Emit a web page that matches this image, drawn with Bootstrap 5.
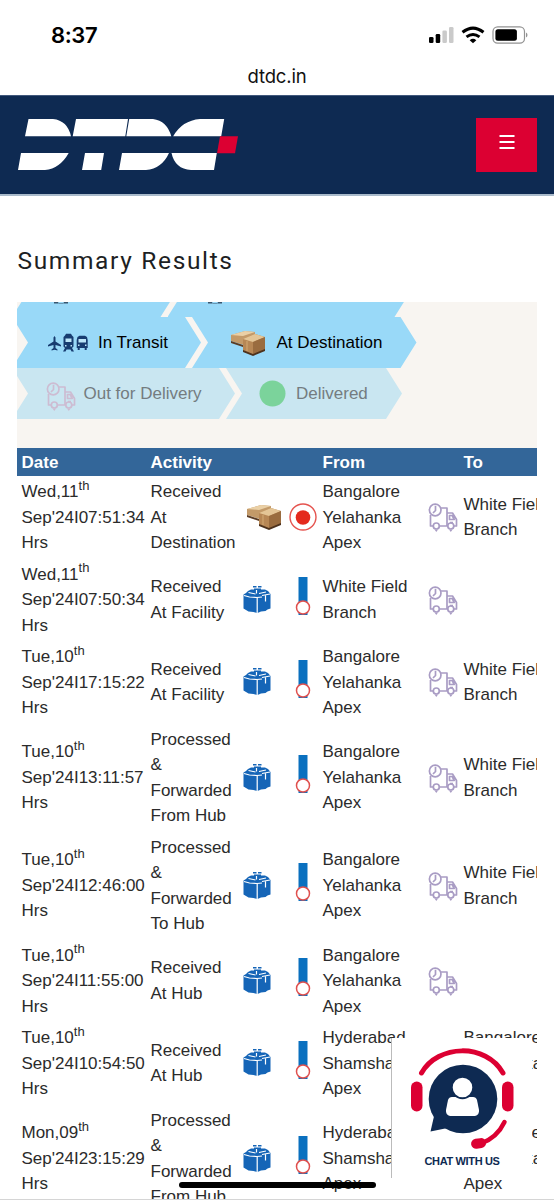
<!DOCTYPE html>
<html lang="en">
<head>
<meta charset="utf-8">
<meta name="viewport" content="width=device-width, initial-scale=1">
<title>DTDC - Summary Results</title>
<link href="https://cdn.jsdelivr.net/npm/bootstrap@5.3.0/dist/css/bootstrap.min.css" rel="stylesheet">
<style>
html,body{height:1200px;overflow:hidden}
body{font-family:"Liberation Sans",Arial,sans-serif;font-size:17px;line-height:25.5px;color:#2b2b2b;background:#fff;position:relative}
.status{height:57px;padding:14px 25px 0 51px;color:#000}
.clock{font:600 22px/42px Inter,sans-serif;letter-spacing:-.4px}
.address{height:38px;font:400 18.5px/38px Inter,sans-serif;color:#111;letter-spacing:-.15px}
.brandbar{height:101px;background:#0e2a52;border-top:1px solid #41587c;border-bottom:2px solid #a9bacb;padding:0 17px}
.menu-btn{width:61px;height:54px;background:#dc0032;border-radius:0}
.page-title{font:400 24.5px/32px Roboto,sans-serif;letter-spacing:1.65px;color:#1d1f24;margin:49px 0 25px 17.5px}
.results{margin:0 17px;width:520px;overflow:hidden}
.steps{height:146px;background:#f8f5f1;overflow:hidden}
.steps-inner{margin:-36px 0 0 -5px}
.step{height:51px;background:#99d9f8;color:#000;white-space:nowrap;clip-path:polygon(0 0,calc(100% - 16px) 0,100% 50%,calc(100% - 16px) 100%,0 100%,16px 50%)}
.step+.step{margin-left:-9px}
.step.pending{background:#c9e6f1;color:#747c80}
.track{width:620px;table-layout:fixed;margin:0}
.track th{height:28px;padding:0 4.5px;background:#336699;color:#fff;font-size:17px;line-height:27px}
.track td{padding:3px 0 3px 4.5px;vertical-align:middle;height:82.5px;color:#2b2b2b}
.track td.pic{padding:0}
.track sup{font-size:13px;line-height:0;top:-7.5px}
.track svg,.step svg{display:block}
.chat{position:absolute;left:391px;top:1038px;width:141px;height:140px;background:#fff;border-left:1px solid #bbb;color:#0e2a52}
.chat-label{font:700 11px/14px "Liberation Sans",sans-serif;letter-spacing:-.35px;text-align:center}
.home{position:absolute;left:179px;top:1182px;width:197px;height:6px;border-radius:3px;background:#000}
.edge{position:absolute;left:0;right:0;bottom:0;height:1px;background:#d5d5d5}
</style>
</head>
<body>
<svg width="0" height="0" class="position-absolute">
<defs>
<symbol id="truck" viewBox="0 0 30 30"><g fill="none" stroke="currentColor" stroke-width="1.7" stroke-linejoin="round"><circle cx="7.200" cy="8" r="5.800"/><path d="M7.500 3.800v4.700l-2.500 2.500M2.500 13v11h2.700M11.500 24h8.300M12.500 6h6.500V24M19 11h5.500l4 6.500V24h-2.500M21.500 13.500h2.700l2 4h-4.700zM22 20.500h3"/><circle cx="8.300" cy="24" r="3"/><circle cx="22.800" cy="24" r="3"/></g><path d="M6.500 27.500h3.600l-1.800 2.500zM21 27.500h3.600L22.800 30z" fill="currentColor"/></symbol>
<symbol id="box" viewBox="0 0 28 28"><path d="M10 0h3.500v1.500H10zM15 0h3.500v1.500H15zM8 3.500h3V2.500h7v1h4l3 1.500 2.500 3v14.500l-3 1-2 1.500-4.500.5-3.500 1.500-4-1-5-.5L3 24l-2.500-1.500V8.500L3 7l2-2z" fill="#1565b7"/><path d="M1 9.500l5.500 1.500 7.500.5 5-.5M5.500 6.500l7 1.500M13.500 4v3.500M14.200 11.500V27M16 7.500l7-1.500M19 9.500l8-1.500M22.500 9.500v6" fill="none" stroke="#fff" stroke-width="1.200"/></symbol>
<symbol id="pallet" viewBox="0 0 36 26"><path d="M1 5l14-4 10 1v8L14 15 1 11z" fill="#c39a69"/><path d="M1 5l14-4 10 1-12 4z" fill="#ead0a6"/><path d="M1 11l12 4v2L1 13z" fill="#5b3c24"/><path d="M13 9l12-5 10 3v13l-12 5-10-4z" fill="#b78755"/><path d="M13 9l12-5 10 3-12 5z" fill="#e4c596"/><path d="M23 12l12-5v13l-12 5z" fill="#9a6c3f"/><path d="M13 20l10 4 12-5v2l-12 5-10-4z" fill="#4d321d"/><path d="M17 11v10" stroke="#d3aa75"/></symbol>
<symbol id="target" viewBox="0 0 30 30"><circle cx="15" cy="15" r="13" fill="none" stroke="#e5544f" stroke-width="1.400"/><circle cx="15" cy="15.500" r="7.300" fill="#e42a1d"/></symbol>
<symbol id="line" viewBox="0 0 16 38"><path d="M3.500 0h9v38h-9z" fill="#0a70bf"/><circle cx="8" cy="30.500" r="6.500" fill="#fff" stroke="#e0504e" stroke-width="1.500"/></symbol>
<symbol id="transit" viewBox="0 0 40 20"><g fill="#173c70"><path d="M6.500 3l1 1.500v4l5.500 3.500v1.500l-5.500-1.500v3l2 1.500v1l-3-.8-3 .8v-1l2-1.500v-3L0 13.500V12l5.500-3.500v-4z"/><path d="M17 2.500L18 .8h5l1 1.700 1.500 1.500v9.500L24 15l2 3.500h-2.500l-1-2h-4l-1 2H15l2-3.500-1.500-1.500V4zM29.500 4l2-1.200h5.500l2 1.200.7 3v8h-1v2h-2v-2h-5v2h-2v-2h-1V7z"/></g><path d="M17.500 5.500h6V9h-6zM30.500 6h7.500v3.500h-7.500zM17 12h1.500v1.500H17zM22.500 12H24v1.500h-1.500zM30 11.500h1.500V13H30zM37 11.500h1.500V13H37z" fill="#bce5f8"/></symbol>
</defs>
</svg>

<div class="status d-flex justify-content-between">
  <span class="clock">8:37</span>
  <svg width="100" height="20" viewBox="0 0 100 20" style="margin-top:11px"><rect x="0" y="12" width="4.500" height="6" rx="1.300"/><rect x="6.700" y="9" width="4.500" height="9" rx="1.300"/><g fill="#cacaca"><rect x="13.400" y="5.500" width="4.500" height="12.500" rx="1.300"/><rect x="20" y="2" width="4.500" height="16" rx="1.300"/></g><g fill="none" stroke="#000" stroke-width="3"><path d="M33.500 7.300Q44-1 54.500 7.300M37.500 11.900Q44 7 50.500 11.900"/></g><path d="M40.700 15.200Q44 12.500 47.300 15.200L44 18.300z"/><rect x="64" y="1.900" width="31.500" height="16.200" rx="4.700" fill="none" stroke="#929292" stroke-width="1.200"/><rect x="66.400" y="4.200" width="21.500" height="11.600" rx="2.500"/><path d="M97 7.500v5q1.500-.8 1.500-2.500T97 7.500" fill="#929292"/></svg>
</div>
<div class="address text-center">dtdc.in</div>

<nav class="brandbar d-flex align-items-center justify-content-between">
  <svg width="222" height="52" viewBox="17 119 222 52" aria-label="DTDC"><g fill="#fff"><path d="M28.500 119H53Q67.500 120.500 71 136.300H25zM76 119H128L125.300 136.300H72.700zM129.200 119H153Q167 121 171.300 136.300H126.300zM173.200 136.300Q182 120.500 200 119H224.200L221.200 136.300zM21 153H68.700Q60 168.500 45 170H18zM85 153H104L101.200 170H82zM122 153H169Q162 168.500 146 170H119zM171.500 153H216.800L214 170H191Q175 169 171.500 153z"/></g><path d="M220 136.300H238L235 153.300H217z" fill="#dc0032"/></svg>
  <button class="menu-btn btn p-0 d-flex align-items-center justify-content-center" type="button" aria-label="Menu"><svg width="16" height="16" viewBox="0 0 16 16" style="margin-top:-6px"><path d="M.5 2h15M.5 8h15M.5 14h15" stroke="#fff" stroke-width="2"/></svg></button>
</nav>

<h1 class="page-title">Summary Results</h1>

<main class="results">
  <div class="steps">
    <div class="steps-inner">
      <div class="d-flex"><div class="step" style="width:164.500px;padding-left:42px"><svg width="14" height="39"><path d="M0 36h4l1 2h4l1-2h4v1.500H0z" fill="#39566f"/></svg></div><div class="step" style="width:243px;padding-left:40px"><svg width="14" height="39"><path d="M0 36h4l1 2h4l1-2h4v1.500H0z" fill="#39566f"/></svg></div></div>
      <div class="d-flex">
        <div class="step d-flex align-items-center" style="width:189px;padding-left:36px"><svg width="40" height="20"><use href="#transit"/></svg><span style="margin-left:10px">In Transit</span></div>
        <div class="step d-flex align-items-center" style="width:224.500px;padding-left:37.500px"><svg width="36" height="26"><use href="#pallet"/></svg><span style="margin-left:11px">At Destination</span></div>
      </div>
      <div class="d-flex">
        <div class="step pending d-flex align-items-center" style="width:223px;padding-left:34px"><svg width="30" height="30" style="color:#cdbcd2;margin-top:4px"><use href="#truck"/></svg><span style="margin-left:7.500px">Out for Delivery</span></div>
        <div class="step pending d-flex align-items-center" style="width:176px;padding-left:33px"><svg width="27" height="27"><circle cx="13.500" cy="13.500" r="13" fill="#7bd39b"/></svg><span style="margin-left:10px">Delivered</span></div>
      </div>
    </div>
  </div>

  <table class="track table table-borderless">
    <colgroup><col style="width:129px"><col style="width:92px"><col style="width:38px"><col style="width:42px"><col style="width:110px"><col style="width:31px"><col></colgroup>
    <thead><tr><th>Date</th><th>Activity</th><th></th><th></th><th>From</th><th></th><th>To</th></tr></thead>
    <tbody id="rows"></tbody>
  </table>
</main>

<div class="chat">
  <svg class="d-block" width="140" height="116" viewBox="392 1038 140 116"><g fill="none" stroke="#dc0032" stroke-linecap="round"><path d="M421.500 1073C438 1044 486 1043 503 1073" stroke-width="5"/><path d="M504.500 1122Q497 1138 480 1144" stroke-width="4.500"/></g><rect x="411" y="1081.500" width="11.500" height="30" rx="5.700" fill="#dc0032"/><rect x="502" y="1081.500" width="11.500" height="30" rx="5.700" fill="#dc0032"/><rect x="471" y="1138.500" width="15" height="10" rx="5" fill="#dc0032" transform="rotate(-8 478 1143)"/><circle cx="463" cy="1099" r="34.300" fill="#0e2a52"/><path d="M435 1112L430.500 1131.500 450 1127.500z" fill="#0e2a52"/><g fill="#fff"><path d="M452 1097h21q3 0 4 3l2 10q.5 5-4 6h-25q-4.500-1-4-6l2-10q1-3 4-3z"/><circle cx="462.500" cy="1087.500" r="10.800" stroke="#0e2a52" stroke-width="2"/></g></svg>
  <div class="chat-label">CHAT WITH US</div>
</div>
<div class="home"></div>
<div class="edge"></div>

<script>
const BYA = 'Bangalore<br>Yelahanka<br>Apex', HSA = 'Hyderabad<br>Shamshabad<br>Apex', WFB = 'White Field<br>Branch';
const rows = [
  ['Wed,11', '07:51:34', 'Received<br>At<br>Destination', BYA, WFB],
  ['Wed,11', '07:50:34', 'Received<br>At Facility', WFB, ''],
  ['Tue,10', '17:15:22', 'Received<br>At Facility', BYA, WFB],
  ['Tue,10', '13:11:57', 'Processed<br>&amp;<br>Forwarded<br>From Hub', BYA, WFB],
  ['Tue,10', '12:46:00', 'Processed<br>&amp;<br>Forwarded<br>To Hub', BYA, WFB],
  ['Tue,10', '11:55:00', 'Received<br>At Hub', BYA, ''],
  ['Tue,10', '10:54:50', 'Received<br>At Hub', HSA, BYA],
  ['Mon,09', '23:15:29', 'Processed<br>&amp;<br>Forwarded<br>From Hub', HSA, BYA]
];
document.getElementById('rows').innerHTML = rows.map(([day, time, act, from, to], i) => `<tr>
<td>${day}<sup>th</sup><br>Sep'24I${time}<br>Hrs</td><td>${act}</td>
<td class="pic">${i ? '<svg width="28" height="28" style="margin-left:5px"><use href="#box"/></svg>' : '<svg width="36" height="26" style="margin-left:8px"><use href="#pallet"/></svg>'}</td>
<td class="pic">${i ? '<svg width="16" height="38" style="margin:-7px 0 0 18.500px"><use href="#line"/></svg>' : '<svg width="30" height="30" style="margin-left:11.500px"><use href="#target"/></svg>'}</td>
<td>${from}</td><td class="pic"><svg width="30" height="30" style="color:#a99cc4"><use href="#truck"/></svg></td><td class="text-nowrap">${to}</td></tr>`).join('');
</script>
<script src="https://cdn.jsdelivr.net/npm/bootstrap@5.3.0/dist/js/bootstrap.bundle.min.js"></script>
</body>
</html>
